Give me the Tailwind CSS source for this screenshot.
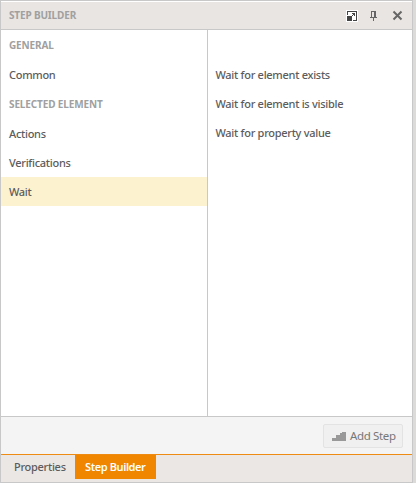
<!DOCTYPE html>
<html lang="en"><head><meta charset="utf-8"><title>Step Builder</title>
<script src="https://cdn.jsdelivr.net/npm/@tailwindcss/browser@4"></script></head>
<body class="h-[483px] w-[416px] overflow-hidden bg-[#dddbd7] font-['Noto_Sans','Open_Sans',sans-serif] text-[11px] font-medium tracking-[-0.28px] text-[#5c5c5c]">
<main class="flex h-[483px] w-[413px] flex-col border border-[#c8c8c8] bg-white">
  <header class="mt-px flex h-7 shrink-0 items-center border-b border-[#c8c8c8] bg-[#e9e5e2] pr-[9px] pl-2">
    <h1 class="grow text-[10px] font-bold tracking-[-0.15px] text-[#a0a0a0]">STEP BUILDER</h1>
    <svg class="h-3 w-3" viewBox="0 0 12 12" shape-rendering="crispEdges"><path fill="#fff" d="M0 0h12v12H0z"/><path fill="#444" d="M1 1h10v10H7v-1h3V2H2v3H1zM1 6h5v5H1zM6 3h3v3H8V4H6zM7 4h1v1H7zM6 5h1v1H6z"/></svg>
    <svg class="ml-[11px] h-3 w-[9px]" viewBox="0 0 9 12" fill="#666" shape-rendering="crispEdges"><path d="M2 1h5v6h1v1H5v3H4V8H1V7h1V2h1v5h2V2H2z"/></svg>
    <svg class="ml-[14px] h-[11px] w-[11px]" viewBox="0 0 11 11" fill="none" stroke="#666" stroke-width="2"><path d="M1.5 1.5l8 8M9.5 1.5l-8 8"/></svg>
  </header>
  <section class="flex h-[386px] shrink-0">
    <nav class="w-[207px] border-r border-[#c8c8c8] *:flex *:h-[29px] *:items-center *:pl-2">
      <h2 class="mt-px text-[10px] font-bold tracking-[-0.13px] text-[#a0a0a0]">GENERAL</h2>
      <div class="pt-0.5">Common</div>
      <h2 class="pt-0.5 text-[10px] font-bold tracking-[-0.13px] text-[#a0a0a0]">SELECTED ELEMENT</h2>
      <div class="pt-[3px]">Actions</div>
      <div class="pt-[3px]">Verifications</div>
      <div class="mt-px bg-[#fcf2cf] pt-0.5">Wait</div>
    </nav>
    <div class="pt-[31px] *:flex *:h-[29px] *:items-center *:pl-[7.5px]">
      <div>Wait for element exists</div>
      <div>Wait for element is visible</div>
      <div>Wait for property value</div>
    </div>
  </section>
  <footer class="flex h-[38px] shrink-0 justify-end border-t border-[#c8c8c8] bg-[#f4f4f4] pt-[7px] pr-[9px]">
    <button class="flex h-6 w-20 items-center rounded-xs border border-[#e3e3e3] bg-[#f0f0f0] pl-2 text-[11.5px] font-normal tracking-[-0.35px] text-[#777]">
      <svg class="mr-1 h-[9px] w-[14px] shrink-0" viewBox="0 0 14 9" fill="#999" shape-rendering="crispEdges"><path d="M0 9V6h4V3h4V1h2V0h4v9z"/></svg>
      <span class="whitespace-nowrap">Add Step</span>
    </button>
  </footer>
  <div class="flex h-7 shrink-0 items-start border-t border-[#ed8b13] bg-[#ebe7e4]">
    <div class="flex h-6 w-[74px] items-center pl-[13px]">Properties</div>
    <div class="flex h-6 w-[81px] items-center bg-[#f08500] pl-[10px] font-semibold tracking-[-0.4px] text-white">Step Builder</div>
  </div>
</main>
</body></html>
